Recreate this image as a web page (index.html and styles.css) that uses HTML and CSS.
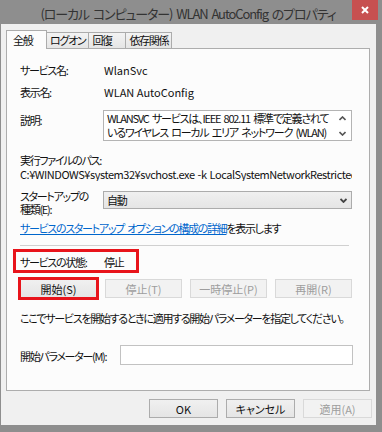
FILE: index.html
```html
<!DOCTYPE html>
<html lang="ja">
<head>
    <meta charset="UTF-8">
    <title>(ローカル コンピューター) WLAN AutoConfig のプロパティ</title>
    <link rel="stylesheet" href="styles.css">
</head>
<body>

    <div class="window">
        <!-- タイトルバー -->
        <div class="titlebar">
            <div class="title">(ローカル コンピューター) WLAN AutoConfig のプロパティ</div>
            <div class="close">
                <svg width="8" height="8" viewBox="0 0 8 8"><path d="M1 1 L7 7 M7 1 L1 7" stroke="#fff" stroke-width="2" fill="none"/></svg>
            </div>
        </div>

        <div class="client">
            <!-- タブ -->
            <div class="tabs">
                <div class="tab active">全般</div>
                <div class="tab">ログオン</div>
                <div class="tab">回復</div>
                <div class="tab">依存関係</div>
            </div>

            <!-- 全般ページ -->
            <div class="page">
                <div class="field first">
                    <span class="label">サービス名:</span>
                    <span class="value latin">WlanSvc</span>
                </div>
                <div class="field">
                    <span class="label">表示名:</span>
                    <span class="value latin">WLAN AutoConfig</span>
                </div>
                <div class="field desc-row">
                    <span class="label">説明:</span>
                    <div class="desc-box">
                        <div class="desc-text">WLANSVC サービスは、IEEE 802.11 標準で定義されているワイヤレス ローカル エリア ネットワーク (WLAN) の構成、検出、接続、および切断に必要なロジックを提供します。</div>
                        <div class="scroll">
                            <svg width="7" height="5" viewBox="0 0 7 5"><path d="M0.5 4 L3.5 1 L6.5 4" stroke="#555" stroke-width="1.6" fill="none"/></svg>
                            <svg width="7" height="5" viewBox="0 0 7 5"><path d="M0.5 1 L3.5 4 L6.5 1" stroke="#555" stroke-width="1.6" fill="none"/></svg>
                        </div>
                    </div>
                </div>

                <div class="path-label">実行ファイルのパス:</div>
                <div class="path">C:¥WINDOWS¥system32¥svchost.exe -k LocalSystemNetworkRestricted</div>

                <div class="field startup-row">
                    <span class="label two-line">スタートアップの<br>種類(E):</span>
                    <div class="select">
                        <span>自動</span>
                        <svg width="7" height="5" viewBox="0 0 7 5"><path d="M0.5 1 L3.5 4 L6.5 1" stroke="#444" stroke-width="1.8" fill="none"/></svg>
                    </div>
                </div>

                <div class="link-row"><a href="#">サービスのスタートアップ オプションの構成の詳細</a>を表示します</div>

                <div class="separator"></div>

                <div class="status">
                    <span class="label">サービスの状態:</span>
                    <span class="value">停止</span>
                </div>

                <div class="service-buttons">
                    <button class="btn marked">開始(S)</button>
                    <button class="btn" disabled>停止(T)</button>
                    <button class="btn" disabled>一時停止(P)</button>
                    <button class="btn" disabled>再開(R)</button>
                </div>

                <div class="hint">ここでサービスを開始するときに適用する開始パラメーターを指定してください。</div>

                <div class="field params-row">
                    <span class="label">開始パラメーター(M):</span>
                    <div class="input"></div>
                </div>
            </div>

            <!-- ダイアログボタン -->
            <div class="actions">
                <button class="btn latin">OK</button>
                <button class="btn">キャンセル</button>
                <button class="btn" disabled>適用(A)</button>
            </div>
        </div>
    </div>

</body>
</html>
```

FILE: styles.css
```css
/* 基本 */
* { margin: 0; padding: 0; box-sizing: border-box; }
body {
    background: #8e8e8e;
    font-family: "Noto Sans CJK JP", sans-serif;
    font-size: 11px;
    font-feature-settings: "palt";
    letter-spacing: -1.3px;
    word-spacing: 2px;
    color: #111;
    line-height: 14px;
    white-space: nowrap;
}
.latin { letter-spacing: 0; word-spacing: 0; }

.window { width: 382px; height: 432px; display: flex; flex-direction: column; overflow: hidden; }

/* タイトルバー */
.titlebar { height: 24px; display: flex; flex-shrink: 0; }
.title {
    flex: 1;
    padding-left: 24px;
    text-align: center;
    font-size: 13px;
    letter-spacing: -1.1px;
    word-spacing: 2px;
    line-height: 28px;
    color: #333;
    overflow: hidden;
}
.close {
    width: 26px;
    height: 20px;
    margin-right: 4px;
    background: #c75050;
    display: flex;
    align-items: center;
    justify-content: center;
    padding-bottom: 1px;
}

.client {
    flex: 1;
    margin: 0 6px 7px 1px;
    background: #f0f0f0;
    padding: 6px 4px 7px 5px;
    display: flex;
    flex-direction: column;
}

/* タブ */
.tabs { height: 18px; display: flex; align-items: flex-end; position: relative; z-index: 1; flex-shrink: 0; }
.tab {
    height: 16px;
    min-width: 38px;
    padding: 0 3px;
    margin-left: -1px;
    border: 1px solid #acacac;
    border-bottom: none;
    background: linear-gradient(#f3f3f3, #e5e5e5);
    line-height: 14px;
}
.tab.active {
    height: 19px;
    min-width: 41px;
    margin: 0 0 -1px 0;
    padding: 2px 7px 0 6px;
    background: #fcfcfc;
    z-index: 2;
}

/* ページ */
.page {
    height: 343px;
    margin-right: 2px;
    border: 1px solid #adadad;
    background: #fcfcfc;
    padding: 0 17px 0 13px;
    flex-shrink: 0;
}

.field { display: grid; grid-template-columns: 83px 1fr; margin-top: 8px; }
.field.first { margin-top: 14px; }
.value { padding-left: 1px; }

.desc-row { margin-top: 11px; }
.desc-row .label { padding-top: 3px; }
.desc-box {
    height: 31px;
    border: 1px solid #b4b4b4;
    background: #fff;
    display: flex;
    overflow: hidden;
}
.desc-text {
    flex: 1;
    padding: 0 0 0 3px;
    height: 29px;
    overflow: hidden;
    white-space: normal;
    letter-spacing: -1.2px;
    line-height: 14px;
}
.scroll { width: 17px; flex-shrink: 0; display: flex; flex-direction: column; justify-content: space-between; align-items: center; padding: 5px 0 4px; }

.path-label { margin-top: 12px; }
.path { overflow: hidden; letter-spacing: -0.45px; word-spacing: 1px; }

.startup-row { margin-top: 10px; }
.two-line { line-height: 13px; margin-top: -1px; }
.select {
    height: 18px;
    border: 1px solid #acacac;
    background: linear-gradient(#f0f0f0, #e5e5e5);
    display: flex;
    align-items: center;
    justify-content: space-between;
    padding: 0 4px 0 3px;
}

.link-row { margin-top: 5px; }
.link-row a { color: #0066cc; }

.separator { height: 1px; background: #d0d0d0; margin: 10px 3px 0 0; }

/* 状態 (赤枠) */
.status {
    width: 126px;
    height: 24px;
    margin: 3px 0 0 -7px;
    border: 3px solid #e8141b;
    padding: 3px 0 0 4px;
    display: grid;
    grid-template-columns: 84px 1fr;
}
.status .value { padding-left: 0; }

.service-buttons { display: grid; grid-template-columns: repeat(4, 1fr); gap: 8px; margin-top: 6px; }

.btn {
    height: 19px;
    border: 1px solid #acacac;
    background: linear-gradient(#f0f0f0, #e5e5e5);
    font: inherit;
    color: #111;
    line-height: 16px;
}
.btn:disabled { border-color: #d9d9d9; background: #f2f2f2; color: #9d9d9d; }
.btn.marked { outline: 3px solid #e8141b; outline-offset: -1px; }

.hint { margin-top: 13px; }

.params-row { grid-template-columns: 100px 1fr; margin-top: 20px; }
.params-row .label { padding-top: 4px; }
.input { height: 20px; border: 1px solid #c2c2c2; background: #fff; margin-right: -1px; }

/* 下のボタン */
.actions { display: flex; justify-content: flex-end; gap: 8px; margin-top: 8px; }
.actions .btn { width: 69px; }
```
